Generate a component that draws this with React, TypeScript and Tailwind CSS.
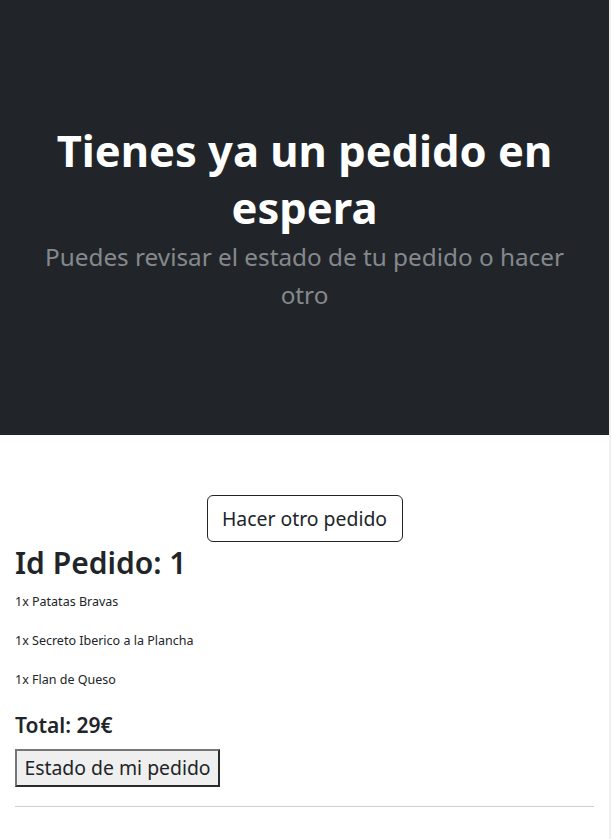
const items = ['1x Patatas Bravas', '1x Secreto Iberico a la Plancha', '1x Flan de Queso']

export default function App() {
  return (
    <div className="flex min-h-[839px] bg-[#f1f1f1] font-['Noto_Sans',sans-serif] text-[#212529]">
      <div className="w-[609px] bg-white">
        {/* Hero */}
        <section className="flex h-[435px] flex-col items-center justify-center bg-[#212529] px-6 text-center">
          <h1 className="text-[43.5px] font-bold leading-[57px] text-white">Tienes ya un pedido en espera</h1>
          <p className="mt-[2px] text-[24.3px] leading-[38px] text-[#85898d]">
            Puedes revisar el estado de tu pedido o hacer otro
          </p>
        </section>

        <div className="px-[15px] pt-[60px]">
          <div className="flex justify-center">
            <button className="h-[47px] w-[196px] rounded-md border border-[#212529] text-[19.4px]">Hacer otro pedido</button>
          </div>

          <h2 className="mt-[2px] text-[30px] font-semibold leading-[38px]">Id Pedido: 1</h2>
          <div className="mt-[8px]">
            {items.map((item) => (
              <p key={item} className="mb-4 text-[12.5px] leading-[23px]">
                {item}
              </p>
            ))}
          </div>
          <h4 className="mt-[19px] text-[21px] font-semibold leading-[30px]">Total: 29€</h4>
          <button className="mt-[9px] h-[38px] w-[205px] border-2 border-t-[#767676] border-l-[#767676] border-b-[#2b2b2b] border-r-[#2b2b2b] bg-[#efefef] text-[19.4px]">
            Estado de mi pedido
          </button>
          <hr className="mt-[19px] border-t border-[#cfcfcf]" />
        </div>
      </div>
    </div>
  )
}
